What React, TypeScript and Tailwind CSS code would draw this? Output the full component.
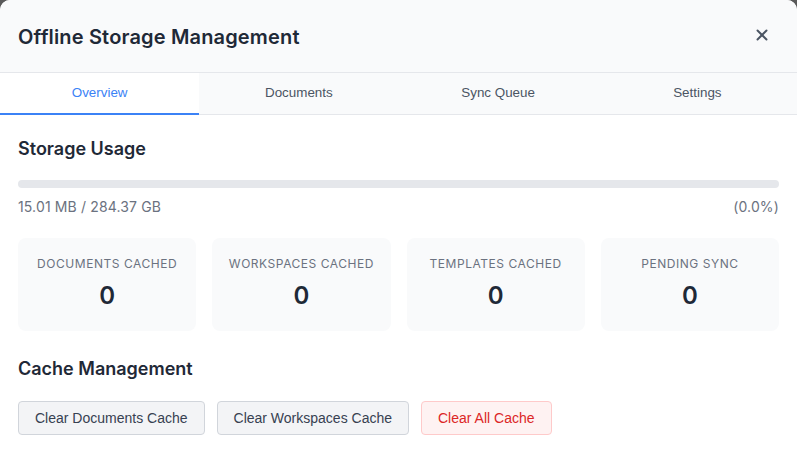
import React from "react";
import { X } from "lucide-react";

export default function App() {
  const tabs = ["Overview", "Documents", "Sync Queue", "Settings"];
  const stats = ["Documents Cached", "Workspaces Cached", "Templates Cached", "Pending Sync"];
  return (
    <div className="w-[797px] h-[452px] bg-[#5a5a5a] overflow-hidden">
      <div className="w-[797px] h-[480px] bg-white rounded-[10px] overflow-hidden font-['Inter',sans-serif]">
        <div className="h-[73px] bg-[#f9fafb] border-b border-[#e5e7eb] flex items-center justify-between pl-[18px] pr-[26px]">
          <h1 className="text-[20px] font-semibold text-[#1f2937] leading-7 mt-[1px] tracking-[0.008em]">Offline Storage Management</h1>
          <X size={18} strokeWidth={2.6} className="text-[#4b5563] mb-[3px]" />
        </div>
        <div className="flex h-[42px] bg-[#f9fafb] border-b border-[#e5e7eb] font-['Liberation_Sans',Arial,sans-serif] text-[13.4px]">
          {tabs.map((t, i) => (
            <div
              key={t}
              className={
                i === 0
                  ? "flex-1 flex items-center justify-center bg-white text-[#3b82f6] border-b-2 border-[#3b82f6] mb-[-1px]"
                  : "flex-1 flex items-center justify-center text-[#4b5563]"
              }
            >
              {t}
            </div>
          ))}
        </div>
        <div className="px-[18px] pt-[20px]">
          <h2 className="text-[18px] font-semibold text-[#1f2937] leading-7">Storage Usage</h2>
          <div className="mt-[17px] h-[8px] rounded-full bg-[#e5e7eb]" />
          <div className="mt-[9px] flex justify-between text-[14px] leading-5 text-[#6b7280] tracking-[0.01em]">
            <span>15.01 MB / 284.37 GB</span>
            <span>(0.0%)</span>
          </div>
          <div className="mt-[21px] grid grid-cols-4 gap-4">
            {stats.map((s) => (
              <div key={s} className="bg-[#f9fafb] rounded-lg pt-[18px] pb-[19px] flex flex-col items-center">
                <div className="text-[12px] leading-4 uppercase tracking-[0.045em] text-[#6b7280]">{s}</div>
                <div className="mt-2 text-[24px] leading-8 font-semibold text-[#1f2937]">0</div>
              </div>
            ))}
          </div>
          <h2 className="mt-[24px] text-[18px] font-semibold text-[#1f2937] leading-7">Cache Management</h2>
          <div className="mt-[18px] flex gap-3 font-['Liberation_Sans',Arial,sans-serif] text-[14px]">
            <button className="h-[34px] px-4 rounded-[4px] border border-[#d1d5db] bg-[#f3f4f6] text-[#374151]">Clear Documents Cache</button>
            <button className="h-[34px] px-4 rounded-[4px] border border-[#d1d5db] bg-[#f3f4f6] text-[#374151]">Clear Workspaces Cache</button>
            <button className="h-[34px] px-4 rounded-[4px] border border-[#fecaca] bg-[#fef2f2] text-[#dc2626]">Clear All Cache</button>
          </div>
        </div>
      </div>
    </div>
  );
}
